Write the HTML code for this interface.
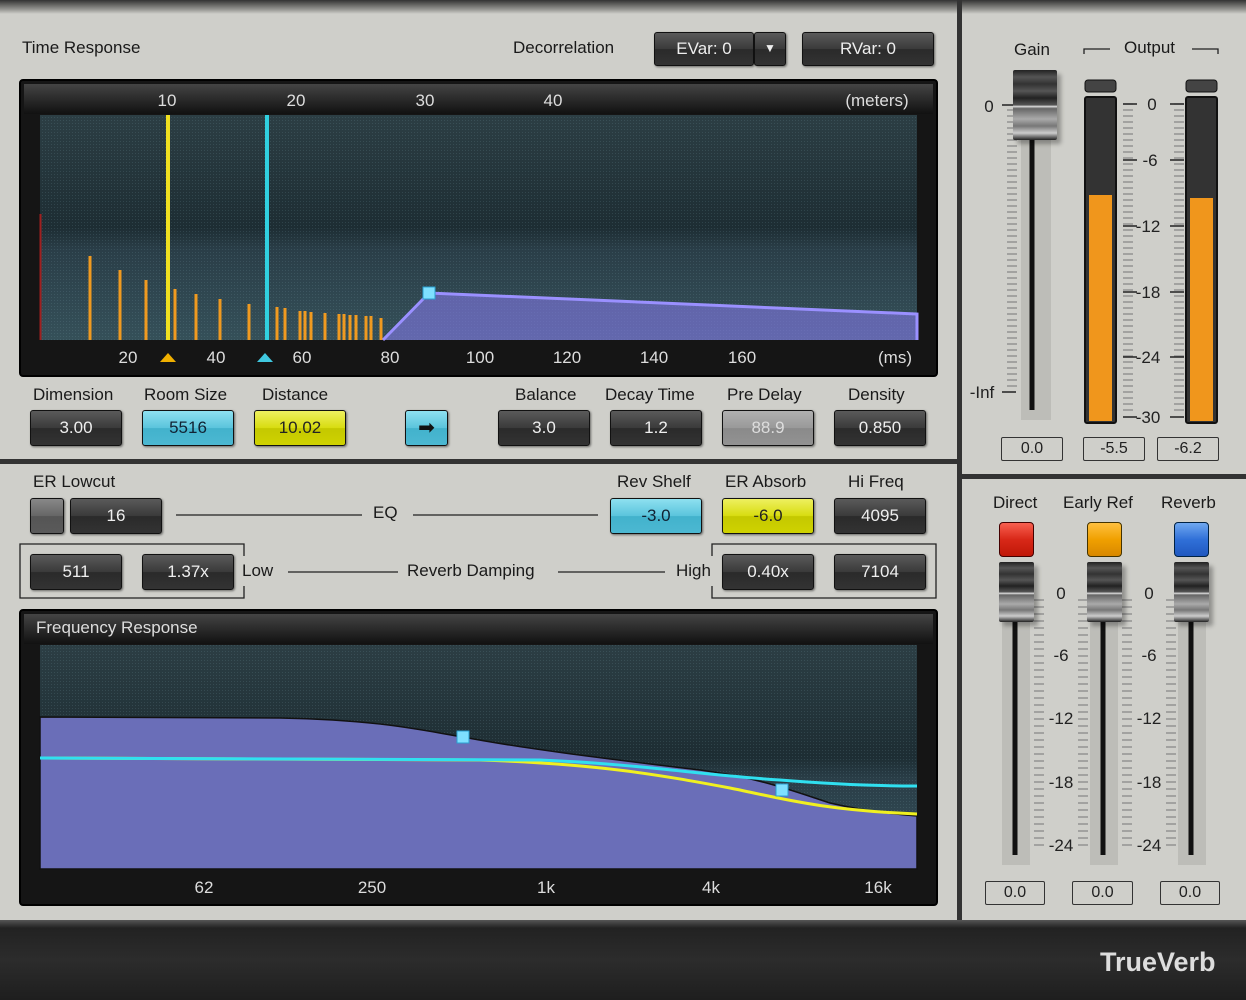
<!DOCTYPE html>
<html><head><meta charset="utf-8"><style>
*{margin:0;padding:0;box-sizing:border-box}
body{width:1246px;height:1000px;overflow:hidden;background:#cfcfca;font-family:"Liberation Sans",sans-serif;position:relative}
.a{position:absolute}
.lbl{position:absolute;font-size:17px;color:#1a1a1a;white-space:nowrap}
.btn{position:absolute;height:36px;border-radius:3px;border:1px solid #111;background:linear-gradient(#5a5a5a,#3a3a3a 50%,#2a2a2a 51%,#333);color:#eee;font-size:17px;text-align:center;line-height:34px;box-shadow:1px 1px 2px rgba(0,0,0,.5)}
.cy{background:linear-gradient(#8ee0f0,#5ac4dc 50%,#42b2cc 51%,#4cb8d2);color:#123}
.ye{background:linear-gradient(#eef060,#d8dc10 50%,#c4c800 51%,#cfd200);color:#222}
.gr{background:linear-gradient(#b0b0b0,#999 50%,#8a8a8a 51%,#929292);color:#ddd}
.box{position:absolute;height:24px;border:1px solid #333;border-radius:2px;font-size:16px;color:#222;text-align:center;line-height:22px}
.cap{position:absolute;border-radius:2px;background:linear-gradient(#222,#555 10%,#333 20%,#555 30%,#222 40%,#555 50%,#ddd 52%,#666 55%,#aaa 70%,#777 80%,#ccc 90%,#222);box-shadow:4px 4px 4px rgba(0,0,0,.3)}
</style></head><body>
<!-- top shadow strip -->
<div class="a" style="left:0;top:0;width:1246px;height:14px;background:linear-gradient(#333,#9a9a96 70%,#cfcfca)"></div>
<div class="a" style="left:957px;top:0;width:5px;height:925px;background:#333"></div>
<div class="a" style="left:0;top:459px;width:957px;height:5px;background:#333"></div>
<div class="a" style="left:962px;top:474px;width:284px;height:5px;background:#333"></div>
<div class="a" style="left:0;top:920px;width:1246px;height:80px;background:linear-gradient(#555,#222 10%,#2c2c2c 50%,#1e1e1e)"></div>
<div class="a" style="left:1100px;top:947px;font-size:27px;font-weight:bold;color:#ddd">TrueVerb</div>

<div class="lbl" style="left:22px;top:38px">Time Response</div>
<div class="lbl" style="left:513px;top:38px">Decorrelation</div>
<div class="btn" style="left:654px;top:32px;width:100px;height:34px;line-height:32px">EVar: 0</div>
<div class="btn" style="left:754px;top:32px;width:32px;height:34px;line-height:30px;font-size:12px">▼</div>
<div class="btn" style="left:802px;top:32px;width:132px;height:34px;line-height:32px">RVar: 0</div>

<svg class="a" style="left:0;top:0" width="957" height="920">
<defs>
<pattern id="dot" width="3" height="3" patternUnits="userSpaceOnUse"><rect width="3" height="3" fill="none"/><rect width="1" height="1" fill="rgba(120,160,170,.18)"/></pattern>
<linearGradient id="bg" x1="0" y1="0" x2="0" y2="1"><stop offset="0" stop-color="#2c3e44"/><stop offset=".5" stop-color="#1d2d33"/><stop offset=".6" stop-color="#2a3e48"/><stop offset="1" stop-color="#355059"/></linearGradient>
<linearGradient id="hdr" x1="0" y1="0" x2="0" y2="1"><stop offset="0" stop-color="#444"/><stop offset="1" stop-color="#111"/></linearGradient>
</defs>
<rect x="20" y="80" width="917" height="296" rx="3" fill="#151515" stroke="#000" stroke-width="2"/>
<rect x="24" y="84" width="909" height="30" fill="url(#hdr)"/>
<rect x="40" y="115" width="877" height="225" fill="url(#bg)"/>
<rect x="40" y="115" width="877" height="225" fill="url(#dot)"/>
<g font-family="Liberation Sans" font-size="17" fill="#ddd" text-anchor="middle">
<text x="167" y="106">10</text><text x="296" y="106">20</text><text x="425" y="106">30</text><text x="553" y="106">40</text><text x="877" y="106">(meters)</text>
<text x="128" y="363">20</text><text x="216" y="363">40</text><text x="302" y="363">60</text><text x="390" y="363">80</text><text x="480" y="363">100</text><text x="567" y="363">120</text><text x="654" y="363">140</text><text x="742" y="363">160</text><text x="895" y="363">(ms)</text>
</g>
<polygon points="160,362 176,362 168,353" fill="#f0b000"/>
<polygon points="257,362 273,362 265,353" fill="#40c8e0"/>
<line x1="40.5" y1="214" x2="40.5" y2="340" stroke="#a02020" stroke-width="2"/>
<g stroke="#f09a20" stroke-width="3">
<line x1="90" y1="256" x2="90" y2="340"/><line x1="120" y1="270" x2="120" y2="340"/><line x1="146" y1="280" x2="146" y2="340"/><line x1="175" y1="289" x2="175" y2="340"/><line x1="196" y1="294" x2="196" y2="340"/><line x1="220" y1="299" x2="220" y2="340"/><line x1="249" y1="304" x2="249" y2="340"/><line x1="277" y1="307" x2="277" y2="340"/><line x1="285" y1="308" x2="285" y2="340"/><line x1="300" y1="311" x2="300" y2="340"/><line x1="305" y1="311" x2="305" y2="340"/><line x1="311" y1="312" x2="311" y2="340"/><line x1="325" y1="313" x2="325" y2="340"/><line x1="339" y1="314" x2="339" y2="340"/><line x1="344" y1="314" x2="344" y2="340"/><line x1="350" y1="315" x2="350" y2="340"/><line x1="356" y1="315" x2="356" y2="340"/><line x1="366" y1="316" x2="366" y2="340"/><line x1="371" y1="316" x2="371" y2="340"/><line x1="381" y1="318" x2="381" y2="340"/>
</g>
<line x1="168" y1="115" x2="168" y2="340" stroke="#f0e020" stroke-width="4"/>
<line x1="267" y1="115" x2="267" y2="340" stroke="#30d0e0" stroke-width="4"/>
<polygon points="383,340 429,293 917,314 917,340" fill="rgba(130,120,230,.6)"/>
<polyline points="383,340 429,293 917,314 917,340" fill="none" stroke="#9a90ff" stroke-width="3"/>
<rect x="423" y="287" width="12" height="12" fill="#7ee0ff" stroke="#2aa0d0"/>

<rect x="20" y="610" width="917" height="295" rx="3" fill="#151515" stroke="#000" stroke-width="2"/>
<rect x="24" y="614" width="909" height="30" fill="url(#hdr)"/>
<rect x="40" y="645" width="877" height="224" fill="url(#bg)"/>
<rect x="40" y="645" width="877" height="224" fill="url(#dot)"/>
<path d="M40,717 L280,718 C380,720 420,730 463,737 C520,748 600,758 700,770 C760,778 790,790 830,803 C860,810 890,814 917,816 L917,869 L40,869Z" fill="#6a6eb8" stroke="#111" stroke-width="1.5"/>
<path d="M40,758 L480,760 C600,764 660,775 730,788 C780,798 820,810 917,814" fill="none" stroke="#f0f020" stroke-width="3"/>
<path d="M40,758 L540,760 C640,764 700,775 780,780 C830,784 870,786 917,786" fill="none" stroke="#30e0f0" stroke-width="3"/>
<rect x="457" y="731" width="12" height="12" fill="#7ee0ff" stroke="#2aa0d0"/>
<rect x="776" y="784" width="12" height="12" fill="#7ee0ff" stroke="#2aa0d0"/>
<g font-family="Liberation Sans" font-size="17" fill="#ddd" text-anchor="middle">
<text x="204" y="893">62</text><text x="372" y="893">250</text><text x="546" y="893">1k</text><text x="711" y="893">4k</text><text x="878" y="893">16k</text>
<text x="36" y="633" text-anchor="start">Frequency Response</text>
</g>
<g stroke="#222" stroke-width="1.3" fill="none">
<line x1="176" y1="515" x2="362" y2="515"/><line x1="413" y1="515" x2="598" y2="515"/>
<line x1="288" y1="572" x2="398" y2="572"/><line x1="558" y1="572" x2="665" y2="572"/>
<polyline points="244,556 244,544 20,544 20,598 244,598 244,586"/>
<polyline points="712,556 712,544 936,544 936,598 712,598 712,586"/>
</g>
</svg>

<div class="lbl" style="left:33px;top:385px">Dimension</div>
<div class="lbl" style="left:144px;top:385px">Room Size</div>
<div class="lbl" style="left:262px;top:385px">Distance</div>
<div class="lbl" style="left:515px;top:385px">Balance</div>
<div class="lbl" style="left:605px;top:385px">Decay Time</div>
<div class="lbl" style="left:727px;top:385px">Pre Delay</div>
<div class="lbl" style="left:848px;top:385px">Density</div>
<div class="btn" style="left:30px;top:410px;width:92px">3.00</div>
<div class="btn cy" style="left:142px;top:410px;width:92px">5516</div>
<div class="btn ye" style="left:254px;top:410px;width:92px">10.02</div>
<div class="btn cy" style="left:405px;top:410px;width:43px;font-size:20px;color:#111">➡</div>
<div class="btn" style="left:498px;top:410px;width:92px">3.0</div>
<div class="btn" style="left:610px;top:410px;width:92px">1.2</div>
<div class="btn gr" style="left:722px;top:410px;width:92px">88.9</div>
<div class="btn" style="left:834px;top:410px;width:92px">0.850</div>

<div class="lbl" style="left:33px;top:472px">ER Lowcut</div>
<div class="lbl" style="left:617px;top:472px">Rev Shelf</div>
<div class="lbl" style="left:725px;top:472px">ER Absorb</div>
<div class="lbl" style="left:848px;top:472px">Hi Freq</div>
<div class="lbl" style="left:373px;top:503px">EQ</div>
<div class="lbl" style="left:242px;top:561px">Low</div>
<div class="lbl" style="left:407px;top:561px">Reverb Damping</div>
<div class="lbl" style="left:676px;top:561px">High</div>
<div class="btn" style="left:30px;top:498px;width:34px;background:linear-gradient(#888,#666 50%,#555 51%,#5a5a5a)"></div>
<div class="btn" style="left:70px;top:498px;width:92px">16</div>
<div class="btn cy" style="left:610px;top:498px;width:92px">-3.0</div>
<div class="btn ye" style="left:722px;top:498px;width:92px">-6.0</div>
<div class="btn" style="left:834px;top:498px;width:92px">4095</div>
<div class="btn" style="left:30px;top:554px;width:92px">511</div>
<div class="btn" style="left:142px;top:554px;width:92px">1.37x</div>
<div class="btn" style="left:722px;top:554px;width:92px">0.40x</div>
<div class="btn" style="left:834px;top:554px;width:92px">7104</div>

<!-- right top -->
<div class="lbl" style="left:1014px;top:40px">Gain</div>
<div class="lbl" style="left:1124px;top:38px">Output</div>
<svg class="a" style="left:962px;top:0" width="284" height="920">
<g stroke="#222" stroke-width="1.3" fill="none"><polyline points="122,54 122,49 148,49"/><polyline points="230,49 256,49 256,54"/></g>
<rect x="59" y="140" width="30" height="280" fill="#bdbdb8"/>
<line x1="70" y1="140" x2="70" y2="410" stroke="#111" stroke-width="5"/>
<g stroke="#888" stroke-width="1.2">
<path d="M45,110h10M45,116h10M45,122h10M45,128h10M45,134h10M45,140h10M45,146h10M45,152h10M45,158h10M45,164h10M45,170h10M45,176h10M45,182h10M45,188h10M45,194h10M45,200h10M45,206h10M45,212h10M45,218h10M45,224h10M45,230h10M45,236h10M45,242h10M45,248h10M45,254h10M45,260h10M45,266h10M45,272h10M45,278h10M45,284h10M45,290h10M45,296h10M45,302h10M45,308h10M45,314h10M45,320h10M45,326h10M45,332h10M45,338h10M45,344h10M45,350h10M45,356h10M45,362h10M45,368h10M45,374h10M45,380h10M45,386h10"/>
<path d="M161,104h10M161,110h10M161,116h10M161,122h10M161,128h10M161,134h10M161,140h10M161,146h10M161,152h10M161,158h10M161,164h10M161,170h10M161,176h10M161,182h10M161,188h10M161,194h10M161,200h10M161,206h10M161,212h10M161,218h10M161,224h10M161,230h10M161,236h10M161,242h10M161,248h10M161,254h10M161,260h10M161,266h10M161,272h10M161,278h10M161,284h10M161,290h10M161,296h10M161,302h10M161,308h10M161,314h10M161,320h10M161,326h10M161,332h10M161,338h10M161,344h10M161,350h10M161,356h10M161,362h10M161,368h10M161,374h10M161,380h10M161,386h10M161,392h10M161,398h10M161,404h10M161,410h10"/>
<path d="M212,104h10M212,110h10M212,116h10M212,122h10M212,128h10M212,134h10M212,140h10M212,146h10M212,152h10M212,158h10M212,164h10M212,170h10M212,176h10M212,182h10M212,188h10M212,194h10M212,200h10M212,206h10M212,212h10M212,218h10M212,224h10M212,230h10M212,236h10M212,242h10M212,248h10M212,254h10M212,260h10M212,266h10M212,272h10M212,278h10M212,284h10M212,290h10M212,296h10M212,302h10M212,308h10M212,314h10M212,320h10M212,326h10M212,332h10M212,338h10M212,344h10M212,350h10M212,356h10M212,362h10M212,368h10M212,374h10M212,380h10M212,386h10M212,392h10M212,398h10M212,404h10M212,410h10"/>
</g>
<g stroke="#222" stroke-width="1.5"><path d="M40,105h14M40,392h14M161,104h14M161,160h14M161,226h14M161,292h14M161,357h14M161,417h14M208,104h14M208,160h14M208,226h14M208,292h14M208,357h14M208,417h14"/></g>
<g font-family="Liberation Sans" font-size="17" fill="#222" text-anchor="middle">
<text x="27" y="112">0</text><text x="20" y="398">-Inf</text>
<text x="190" y="110">0</text><text x="188" y="166">-6</text><text x="186" y="232">-12</text><text x="186" y="298">-18</text><text x="186" y="363">-24</text><text x="186" y="423">-30</text>
</g>
<rect x="123" y="80" width="31" height="12" rx="3" fill="#444" stroke="#111"/>
<rect x="224" y="80" width="31" height="12" rx="3" fill="#444" stroke="#111"/>
<rect x="123" y="97" width="31" height="326" rx="2" fill="#333" stroke="#111" stroke-width="2"/>
<rect x="224" y="97" width="31" height="326" rx="2" fill="#333" stroke="#111" stroke-width="2"/>
<rect x="127" y="195" width="23" height="226" fill="#f0961c"/>
<rect x="228" y="198" width="23" height="223" fill="#f0961c"/>

<!-- bottom faders -->
<g fill="#bdbdb8"><rect x="40" y="620" width="28" height="245"/><rect x="128" y="620" width="28" height="245"/><rect x="216" y="620" width="28" height="245"/></g>
<g stroke="#111" stroke-width="5"><line x1="53" y1="622" x2="53" y2="855"/><line x1="141" y1="622" x2="141" y2="855"/><line x1="229" y1="622" x2="229" y2="855"/></g>
<g stroke="#888" stroke-width="1.2">
<path d="M72,600h10M72,607h10M72,614h10M72,621h10M72,628h10M72,635h10M72,642h10M72,649h10M72,656h10M72,663h10M72,670h10M72,677h10M72,684h10M72,691h10M72,698h10M72,705h10M72,712h10M72,719h10M72,726h10M72,733h10M72,740h10M72,747h10M72,754h10M72,761h10M72,768h10M72,775h10M72,782h10M72,789h10M72,796h10M72,803h10M72,810h10M72,817h10M72,824h10M72,831h10M72,838h10M72,845h10"/>
<path d="M116,600h10M116,607h10M116,614h10M116,621h10M116,628h10M116,635h10M116,642h10M116,649h10M116,656h10M116,663h10M116,670h10M116,677h10M116,684h10M116,691h10M116,698h10M116,705h10M116,712h10M116,719h10M116,726h10M116,733h10M116,740h10M116,747h10M116,754h10M116,761h10M116,768h10M116,775h10M116,782h10M116,789h10M116,796h10M116,803h10M116,810h10M116,817h10M116,824h10M116,831h10M116,838h10M116,845h10"/>
<path d="M160,600h10M160,607h10M160,614h10M160,621h10M160,628h10M160,635h10M160,642h10M160,649h10M160,656h10M160,663h10M160,670h10M160,677h10M160,684h10M160,691h10M160,698h10M160,705h10M160,712h10M160,719h10M160,726h10M160,733h10M160,740h10M160,747h10M160,754h10M160,761h10M160,768h10M160,775h10M160,782h10M160,789h10M160,796h10M160,803h10M160,810h10M160,817h10M160,824h10M160,831h10M160,838h10M160,845h10"/>
<path d="M204,600h10M204,607h10M204,614h10M204,621h10M204,628h10M204,635h10M204,642h10M204,649h10M204,656h10M204,663h10M204,670h10M204,677h10M204,684h10M204,691h10M204,698h10M204,705h10M204,712h10M204,719h10M204,726h10M204,733h10M204,740h10M204,747h10M204,754h10M204,761h10M204,768h10M204,775h10M204,782h10M204,789h10M204,796h10M204,803h10M204,810h10M204,817h10M204,824h10M204,831h10M204,838h10M204,845h10"/>
</g>
<g font-family="Liberation Sans" font-size="17" fill="#222" text-anchor="middle">
<text x="99" y="599">0</text><text x="99" y="661">-6</text><text x="99" y="724">-12</text><text x="99" y="788">-18</text><text x="99" y="851">-24</text>
<text x="187" y="599">0</text><text x="187" y="661">-6</text><text x="187" y="724">-12</text><text x="187" y="788">-18</text><text x="187" y="851">-24</text>
</g>
</svg>
<div class="cap" style="left:1013px;top:70px;width:44px;height:70px"></div>
<div class="box" style="left:1001px;top:437px;width:62px">0.0</div>
<div class="box" style="left:1083px;top:437px;width:62px">-5.5</div>
<div class="box" style="left:1157px;top:437px;width:62px">-6.2</div>

<div class="lbl" style="left:993px;top:493px">Direct</div>
<div class="lbl" style="left:1063px;top:493px">Early Ref</div>
<div class="lbl" style="left:1161px;top:493px">Reverb</div>
<div class="a" style="left:999px;top:522px;width:35px;height:35px;border-radius:4px;border:1px solid #400;background:linear-gradient(#f86050,#d82818 50%,#c01808)"></div>
<div class="a" style="left:1087px;top:522px;width:35px;height:35px;border-radius:4px;border:1px solid #430;background:linear-gradient(#ffc040,#f0a000 50%,#d88800)"></div>
<div class="a" style="left:1174px;top:522px;width:35px;height:35px;border-radius:4px;border:1px solid #024;background:linear-gradient(#70a8f0,#3070d8 50%,#2058c0)"></div>
<div class="cap" style="left:999px;top:562px;width:35px;height:60px"></div>
<div class="cap" style="left:1087px;top:562px;width:35px;height:60px"></div>
<div class="cap" style="left:1174px;top:562px;width:35px;height:60px"></div>
<div class="box" style="left:985px;top:881px;width:60px">0.0</div>
<div class="box" style="left:1072px;top:881px;width:61px">0.0</div>
<div class="box" style="left:1160px;top:881px;width:60px">0.0</div>
</body></html>
